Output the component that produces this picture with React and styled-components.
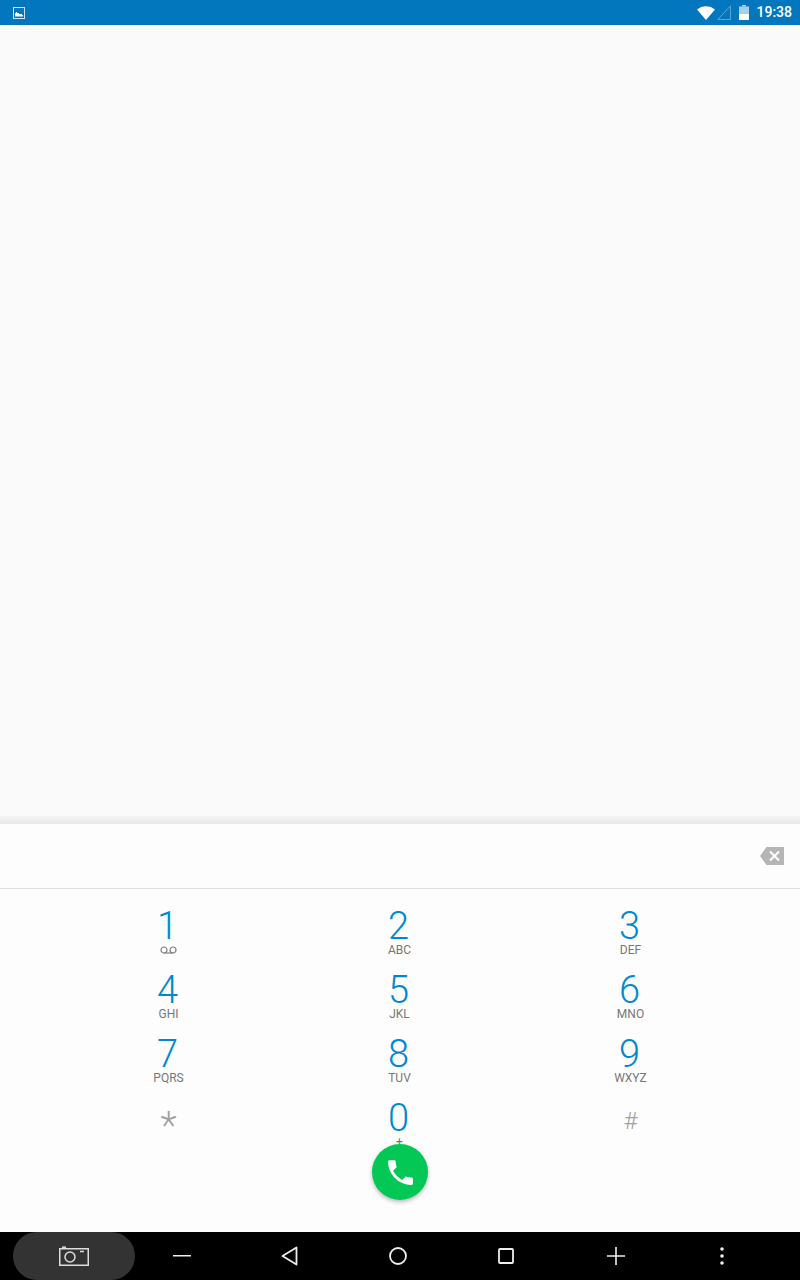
import React from "react";
import styled, { createGlobalStyle } from "styled-components";

const Global = createGlobalStyle`
  html, body { margin: 0; padding: 0; background: #fafafa; }
  * { box-sizing: border-box; }
  #root { width: 800px; height: 1280px; }
`;

const Screen = styled.div`
  width: 800px;
  height: 1280px;
  display: flex;
  flex-direction: column;
  font-family: Roboto, "Liberation Sans", sans-serif;
  overflow: hidden;
`;

const StatusBar = styled.div`
  height: 25px;
  background: #0277bd;
  display: flex;
  align-items: center;
  padding: 0 8px 0 13px;
  flex: none;
`;

const StatusIcons = styled.div`
  margin-left: auto;
  display: flex;
  align-items: center;
  gap: 2px;
`;

const Clock = styled.span`
  color: #fff;
  font-size: 14px;
  font-weight: 500;
  line-height: 25px;
  margin-left: 5px;
`;

const Recents = styled.div`
  flex: 1;
  background: #fafafa;
`;

const Shadow = styled.div`
  height: 8px;
  flex: none;
  background: linear-gradient(#f4f4f4, #e8e8e8);
`;

const Panel = styled.div`
  position: relative;
  height: 408px;
  flex: none;
  background: #fdfdfd;
`;

const Digits = styled.div`
  height: 65px;
  display: flex;
  align-items: center;
  justify-content: flex-end;
  padding: 0 16px 1px 0;
  border-bottom: 1px solid #dedede;
`;

const Keypad = styled.div`
  display: grid;
  grid-template-columns: repeat(3, 231px);
  grid-auto-rows: 64px;
  padding-left: 53px;
`;

const Key = styled.div`
  display: flex;
  flex-direction: column;
  align-items: center;
`;

const Num = styled.span`
  color: ${(p) => (p.$muted ? "#a0a0a0" : "#0288d1")};
  font-size: ${(p) => p.$size || 38}px;
  font-weight: 300;
  line-height: 34px;
  height: 34px;
  margin-top: ${(p) => p.$top ?? 20}px;
  margin-right: ${(p) => (p.$muted ? 0 : 2)}px;
`;

const Sub = styled.span`
  color: #777;
  font-size: 12px;
  line-height: 14px;
  height: 14px;
  display: flex;
  align-items: center;
`;

const CallButton = styled.div`
  position: absolute;
  left: 372px;
  top: 320px;
  width: 56px;
  height: 56px;
  border-radius: 50%;
  background: #04c855;
  box-shadow: 0 2px 4px rgba(0, 0, 0, 0.28);
  display: flex;
  align-items: center;
  justify-content: center;
`;

const NavBar = styled.div`
  height: 48px;
  flex: none;
  background: #000;
  display: grid;
  grid-template-columns: 13px 122px 94px 122px 94px 122px 98px 114px 21px;
`;

const NavSlot = styled.div`
  display: flex;
  align-items: center;
  justify-content: center;
`;

const CameraPill = styled(NavSlot)`
  background: #333;
  border-radius: 24px;
`;

const Pic = () => (
  <svg width="12" height="12" viewBox="0 0 12 12">
    <rect x="0.5" y="0.5" width="11" height="11" fill="none" stroke="#cfe4f2" />
    <path d="M2 9.5V6h1V5h1v1h2v1h3v1h1v1.5z" fill="#fff" />
  </svg>
);

const Wifi = () => (
  <svg width="18" height="14" viewBox="0 0 18 14">
    <path d="M0 3.5C5-1 13-1 18 3.5L9 14z" fill="#fff" />
  </svg>
);

const Signal = () => (
  <svg width="14" height="15" viewBox="0 0 14 15">
    <path d="M13.5 0.8V14.5H0.8z" fill="none" stroke="#5aa7d6" strokeWidth="1" />
  </svg>
);

const Battery = () => (
  <svg width="10" height="15" viewBox="0 0 10 15" style={{ marginLeft: 6 }}>
    <rect x="3" y="0" width="4" height="1.5" fill="#a9cfe7" />
    <rect x="0" y="1.5" width="10" height="7.5" fill="#a9cfe7" />
    <rect x="0" y="9" width="10" height="6" fill="#fff" />
  </svg>
);

const Backspace = () => (
  <svg width="24" height="18" viewBox="0 0 24 18">
    <path d="M6.5 0H24V18H6.5L0 9z" fill="#b5b5b5" />
    <path d="M10 4.5l9 9M19 4.5l-9 9" stroke="#fdfdfd" strokeWidth="2" fill="none" />
  </svg>
);

const Voicemail = () => (
  <svg width="17" height="8" viewBox="0 0 17 8" style={{ marginTop: 3 }}>
    <circle cx="4" cy="4" r="3" fill="none" stroke="#808080" strokeWidth="1.2" />
    <circle cx="13" cy="4" r="3" fill="none" stroke="#808080" strokeWidth="1.2" />
    <path d="M4 7h9" stroke="#808080" strokeWidth="1.2" />
  </svg>
);

const Phone = () => (
  <svg width="33" height="33" viewBox="0 0 24 24">
    <path
      d="M6.6 10.8c1.4 2.8 3.8 5.1 6.6 6.6l2.2-2.2c.3-.3.7-.4 1-.2 1.1.4 2.3.6 3.6.6.6 0 1 .4 1 1V20c0 .6-.4 1-1 1C10.6 21 3 13.4 3 4c0-.6.4-1 1-1h3.5c.6 0 1 .4 1 1 0 1.3.2 2.5.6 3.6.1.3 0 .7-.2 1z"
      fill="#fff"
    />
  </svg>
);

const Camera = () => (
  <svg width="30" height="20" viewBox="0 0 30 20" fill="none" stroke="#ddd" strokeWidth="1.5">
    <rect x="0.75" y="2.75" width="28.5" height="16.5" />
    <path d="M3 1.2h4" />
    <circle cx="11" cy="11" r="5" />
    <path d="M21 5.5h4" />
  </svg>
);

const Minus = () => (
  <svg width="18" height="2" viewBox="0 0 18 2"><rect width="18" height="1.5" fill="#eee" /></svg>
);
const Back = () => (
  <svg width="18" height="20" viewBox="0 0 18 20" fill="none" stroke="#eee" strokeWidth="1.8" strokeLinejoin="round">
    <path d="M15.5 1.5V18.5L1.5 10z" />
  </svg>
);
const Home = () => (
  <svg width="20" height="20" viewBox="0 0 20 20" fill="none" stroke="#eee" strokeWidth="1.8">
    <circle cx="10" cy="10" r="8" />
  </svg>
);
const Square = () => (
  <svg width="16" height="16" viewBox="0 0 16 16" fill="none" stroke="#eee" strokeWidth="1.8">
    <rect x="1" y="1" width="14" height="14" rx="1" />
  </svg>
);
const Plus = () => (
  <svg width="18" height="18" viewBox="0 0 18 18" stroke="#eee" strokeWidth="1.6">
    <path d="M0 9h18M9 0v18" />
  </svg>
);
const Dots = () => (
  <svg width="4" height="18" viewBox="0 0 4 18" fill="#eee">
    <circle cx="2" cy="2" r="1.8" />
    <circle cx="2" cy="9" r="1.8" />
    <circle cx="2" cy="16" r="1.8" />
  </svg>
);

const keys = [
  ["1", <Voicemail key="v" />], ["2", "ABC"], ["3", "DEF"],
  ["4", "GHI"], ["5", "JKL"], ["6", "MNO"],
  ["7", "PQRS"], ["8", "TUV"], ["9", "WXYZ"],
];

export default function App() {
  return (
    <Screen>
      <Global />
      <StatusBar>
        <Pic />
        <StatusIcons>
          <Wifi />
          <Signal />
          <Battery />
          <Clock>19:38</Clock>
        </StatusIcons>
      </StatusBar>
      <Recents />
      <Shadow />
      <Panel>
        <Digits>
          <Backspace />
        </Digits>
        <Keypad>
          {keys.map(([n, s]) => (
            <Key key={n}>
              <Num>{n}</Num>
              <Sub>{s}</Sub>
            </Key>
          ))}
          <Key>
            <Num $muted $top={28}>*</Num>
          </Key>
          <Key>
            <Num>0</Num>
            <Sub>+</Sub>
          </Key>
          <Key>
            <Num $muted $size={24} $top={23}>#</Num>
          </Key>
        </Keypad>
        <CallButton>
          <Phone />
        </CallButton>
      </Panel>
      <NavBar>
        <span />
        <CameraPill><Camera /></CameraPill>
        <NavSlot><Minus /></NavSlot>
        <NavSlot><Back /></NavSlot>
        <NavSlot><Home /></NavSlot>
        <NavSlot><Square /></NavSlot>
        <NavSlot><Plus /></NavSlot>
        <NavSlot><Dots /></NavSlot>
      </NavBar>
    </Screen>
  );
}
